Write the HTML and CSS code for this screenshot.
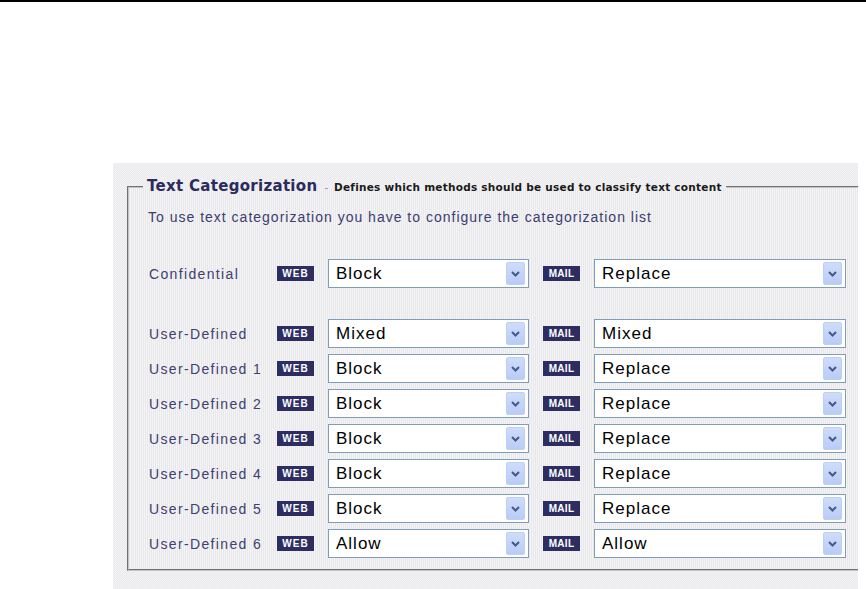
FILE: index.html
```html
<!DOCTYPE html>
<html lang="en">
<head>
<meta charset="utf-8">
<title>Text Categorization</title>
<link rel="stylesheet" href="styles.css">
</head>
<body>
<div class="topbar"></div>
<div class="panel">
  <fieldset class="group">
    <legend class="group-legend"><span class="legend-title">Text Categorization</span><span class="legend-dash">-</span><span class="legend-desc">Defines which methods should be used to classify text content</span></legend>
    <p class="hint">To use text categorization you have to configure the categorization list</p>
    <div class="rules">
      <div class="rule rule-first">
        <span class="rule-name">Confidential</span>
        <span class="tag">WEB</span>
        <div class="combo combo-web"><span class="combo-value">Block</span><span class="combo-btn"><svg width="9" height="6" viewBox="0 0 9 6"><path d="M1 1 L4.5 4.5 L8 1" fill="none" stroke="#46598a" stroke-width="2"/></svg></span></div>
        <span class="tag tag-mail">MAIL</span>
        <div class="combo combo-mail"><span class="combo-value">Replace</span><span class="combo-btn"><svg width="9" height="6" viewBox="0 0 9 6"><path d="M1 1 L4.5 4.5 L8 1" fill="none" stroke="#46598a" stroke-width="2"/></svg></span></div>
      </div>
      <div class="rule">
        <span class="rule-name">User-Defined</span>
        <span class="tag">WEB</span>
        <div class="combo combo-web"><span class="combo-value">Mixed</span><span class="combo-btn"><svg width="9" height="6" viewBox="0 0 9 6"><path d="M1 1 L4.5 4.5 L8 1" fill="none" stroke="#46598a" stroke-width="2"/></svg></span></div>
        <span class="tag tag-mail">MAIL</span>
        <div class="combo combo-mail"><span class="combo-value">Mixed</span><span class="combo-btn"><svg width="9" height="6" viewBox="0 0 9 6"><path d="M1 1 L4.5 4.5 L8 1" fill="none" stroke="#46598a" stroke-width="2"/></svg></span></div>
      </div>
      <div class="rule">
        <span class="rule-name">User-Defined 1</span>
        <span class="tag">WEB</span>
        <div class="combo combo-web"><span class="combo-value">Block</span><span class="combo-btn"><svg width="9" height="6" viewBox="0 0 9 6"><path d="M1 1 L4.5 4.5 L8 1" fill="none" stroke="#46598a" stroke-width="2"/></svg></span></div>
        <span class="tag tag-mail">MAIL</span>
        <div class="combo combo-mail"><span class="combo-value">Replace</span><span class="combo-btn"><svg width="9" height="6" viewBox="0 0 9 6"><path d="M1 1 L4.5 4.5 L8 1" fill="none" stroke="#46598a" stroke-width="2"/></svg></span></div>
      </div>
      <div class="rule">
        <span class="rule-name">User-Defined 2</span>
        <span class="tag">WEB</span>
        <div class="combo combo-web"><span class="combo-value">Block</span><span class="combo-btn"><svg width="9" height="6" viewBox="0 0 9 6"><path d="M1 1 L4.5 4.5 L8 1" fill="none" stroke="#46598a" stroke-width="2"/></svg></span></div>
        <span class="tag tag-mail">MAIL</span>
        <div class="combo combo-mail"><span class="combo-value">Replace</span><span class="combo-btn"><svg width="9" height="6" viewBox="0 0 9 6"><path d="M1 1 L4.5 4.5 L8 1" fill="none" stroke="#46598a" stroke-width="2"/></svg></span></div>
      </div>
      <div class="rule">
        <span class="rule-name">User-Defined 3</span>
        <span class="tag">WEB</span>
        <div class="combo combo-web"><span class="combo-value">Block</span><span class="combo-btn"><svg width="9" height="6" viewBox="0 0 9 6"><path d="M1 1 L4.5 4.5 L8 1" fill="none" stroke="#46598a" stroke-width="2"/></svg></span></div>
        <span class="tag tag-mail">MAIL</span>
        <div class="combo combo-mail"><span class="combo-value">Replace</span><span class="combo-btn"><svg width="9" height="6" viewBox="0 0 9 6"><path d="M1 1 L4.5 4.5 L8 1" fill="none" stroke="#46598a" stroke-width="2"/></svg></span></div>
      </div>
      <div class="rule">
        <span class="rule-name">User-Defined 4</span>
        <span class="tag">WEB</span>
        <div class="combo combo-web"><span class="combo-value">Block</span><span class="combo-btn"><svg width="9" height="6" viewBox="0 0 9 6"><path d="M1 1 L4.5 4.5 L8 1" fill="none" stroke="#46598a" stroke-width="2"/></svg></span></div>
        <span class="tag tag-mail">MAIL</span>
        <div class="combo combo-mail"><span class="combo-value">Replace</span><span class="combo-btn"><svg width="9" height="6" viewBox="0 0 9 6"><path d="M1 1 L4.5 4.5 L8 1" fill="none" stroke="#46598a" stroke-width="2"/></svg></span></div>
      </div>
      <div class="rule">
        <span class="rule-name">User-Defined 5</span>
        <span class="tag">WEB</span>
        <div class="combo combo-web"><span class="combo-value">Block</span><span class="combo-btn"><svg width="9" height="6" viewBox="0 0 9 6"><path d="M1 1 L4.5 4.5 L8 1" fill="none" stroke="#46598a" stroke-width="2"/></svg></span></div>
        <span class="tag tag-mail">MAIL</span>
        <div class="combo combo-mail"><span class="combo-value">Replace</span><span class="combo-btn"><svg width="9" height="6" viewBox="0 0 9 6"><path d="M1 1 L4.5 4.5 L8 1" fill="none" stroke="#46598a" stroke-width="2"/></svg></span></div>
      </div>
      <div class="rule">
        <span class="rule-name">User-Defined 6</span>
        <span class="tag">WEB</span>
        <div class="combo combo-web"><span class="combo-value">Allow</span><span class="combo-btn"><svg width="9" height="6" viewBox="0 0 9 6"><path d="M1 1 L4.5 4.5 L8 1" fill="none" stroke="#46598a" stroke-width="2"/></svg></span></div>
        <span class="tag tag-mail">MAIL</span>
        <div class="combo combo-mail"><span class="combo-value">Allow</span><span class="combo-btn"><svg width="9" height="6" viewBox="0 0 9 6"><path d="M1 1 L4.5 4.5 L8 1" fill="none" stroke="#46598a" stroke-width="2"/></svg></span></div>
      </div>
    </div>
  </fieldset>
</div>
</body>
</html>
```
FILE: styles.css
```css
html, body {
  margin: 0;
  padding: 0;
  background: #ffffff;
}

body {
  font-family: "Liberation Sans", Arial, sans-serif;
}

.topbar {
  height: 2px;
  background: #000000;
}

/* light dithered settings panel */
.panel {
  margin: 161px 0 0 113px;
  width: 745px;
  height: 426px;
  box-sizing: border-box;
  padding: 14px 0 0 14px;
  overflow: hidden;
  background-color: #eeeef1;
  background-image: conic-gradient(#ebebee 25%, #f2f2f4 0 50%, #ebebee 0 75%, #f2f2f4 0);
  background-size: 2px 2px;
}

/* grouped box with fine vertical stripes */
.group {
  margin: 0;
  width: 760px;
  box-sizing: border-box;
  padding: 11px 0 11px 19px;
  border: 2px groove #c4c4c8;
  background-color: #efeff1;
  background-image: repeating-linear-gradient(90deg, #e8e8eb 0 1px, #f4f4f6 1px 2px);
}

.group-legend {
  margin-left: -5px;
  padding: 0 4px;
  line-height: 18px;
  white-space: nowrap;
}

.legend-title {
  font-family: "DejaVu Sans", Verdana, sans-serif;
  font-weight: bold;
  font-size: 15px;
  letter-spacing: 0.3px;
  color: #2b2b5e;
}

.legend-dash {
  font-family: "DejaVu Sans", Verdana, sans-serif;
  font-size: 10px;
  color: #8a8a9a;
  padding: 0 6px 0 7px;
}

.legend-desc {
  font-family: "DejaVu Sans", Verdana, sans-serif;
  font-size: 10.5px;
  font-weight: bold;
  letter-spacing: 0.25px;
  color: #1a1a1a;
}

.hint {
  margin: 0;
  font-size: 14px;
  line-height: 18px;
  letter-spacing: 1px;
  color: #3c3c6e;
}

.rules {
  margin-top: 33px;
  display: flex;
  flex-direction: column;
  gap: 6px;
}

.rule {
  display: flex;
  align-items: center;
  gap: 14px;
  height: 29px;
}

.rule-first {
  margin-bottom: 25px;
}

.rule-name {
  width: 115px;
  flex: none;
  font-size: 14px;
  letter-spacing: 1.35px;
  color: #40406e;
  padding-left: 1px;
  box-sizing: border-box;
  white-space: nowrap;
}

/* small navy channel tags */
.tag {
  flex: none;
  width: 37px;
  height: 15px;
  background: #2d2d62;
  color: #ffffff;
  font-size: 10px;
  font-weight: bold;
  letter-spacing: 1px;
  line-height: 15px;
  text-align: center;
}

.tag-mail {
  letter-spacing: 0.3px;
}

/* XP-style drop-down boxes */
.combo {
  flex: none;
  box-sizing: border-box;
  height: 29px;
  border: 1px solid #7f9db9;
  background: #ffffff;
  display: flex;
  align-items: center;
  justify-content: space-between;
  padding: 0 3px 0 7px;
}

.combo-web {
  width: 201px;
}

.combo-mail {
  width: 252px;
}

.combo-value {
  font-size: 17px;
  letter-spacing: 1px;
  color: #000000;
}

.combo-btn {
  width: 19px;
  height: 23px;
  box-sizing: border-box;
  border: 1px solid #bccff5;
  border-radius: 2px;
  background: linear-gradient(180deg, #cfdcfa 0%, #b9ccf6 100%);
  display: flex;
  align-items: center;
  justify-content: center;
}
```
